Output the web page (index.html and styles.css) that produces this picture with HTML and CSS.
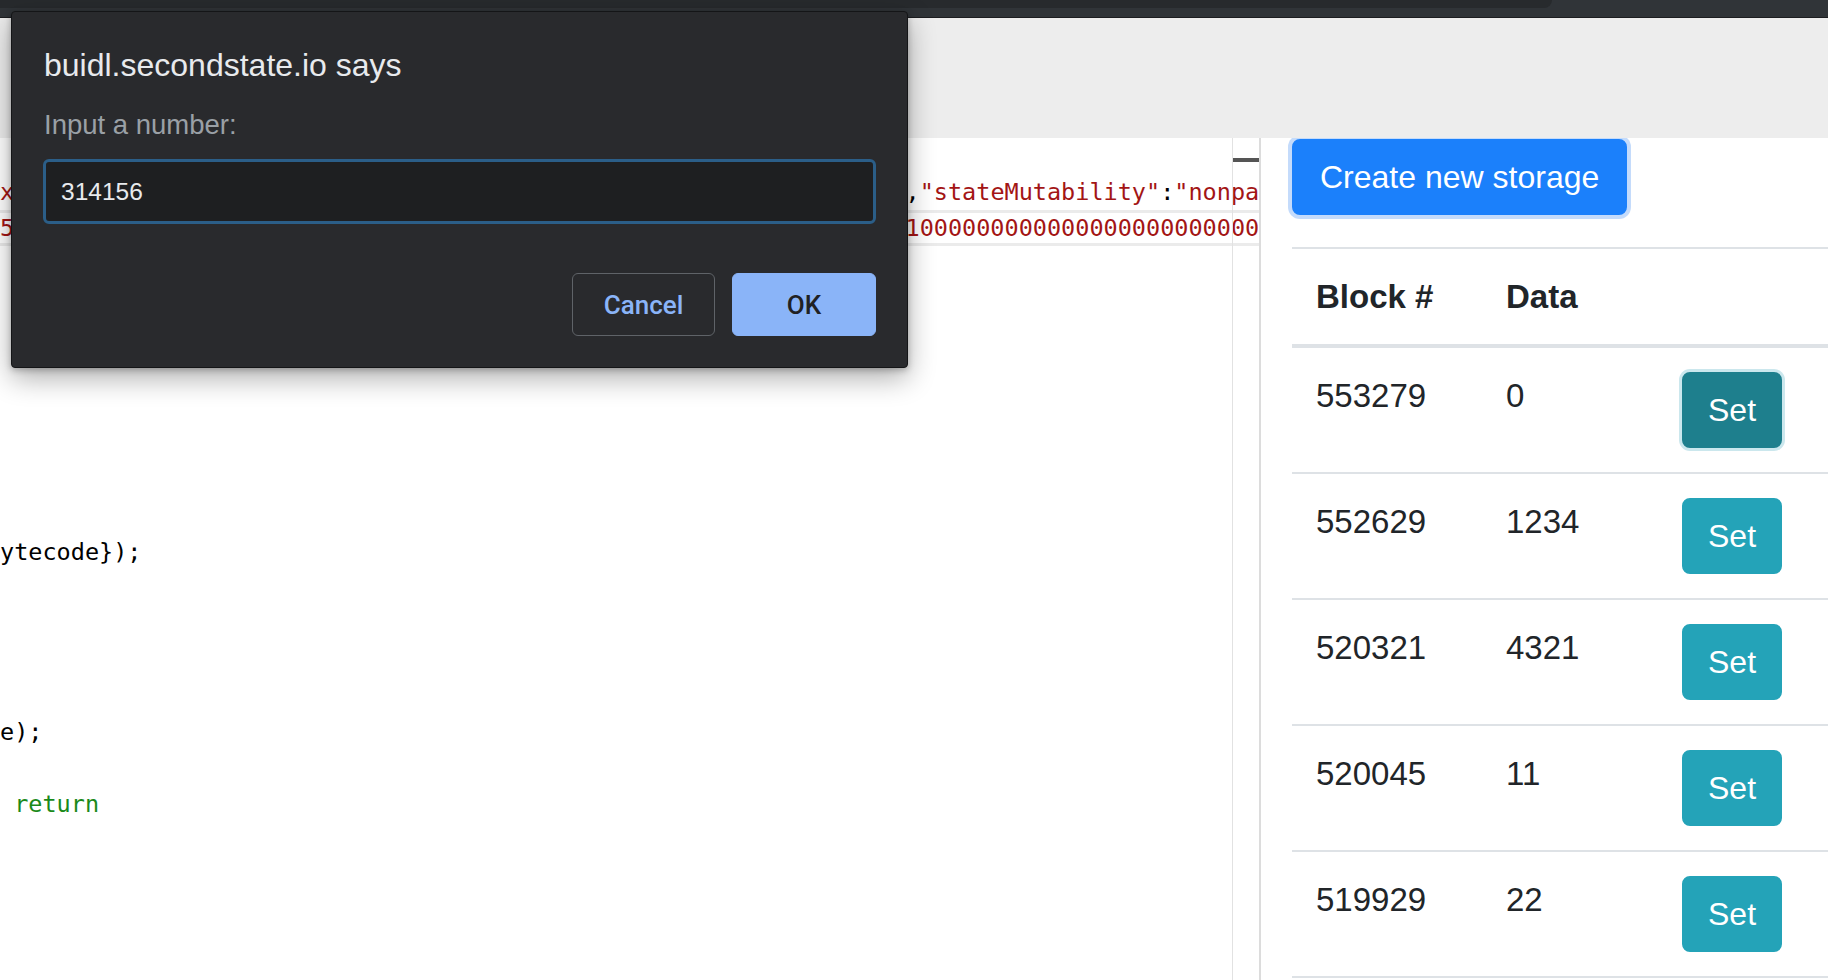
FILE: index.html
```html
<!DOCTYPE html>
<html>
<head>
<meta charset="utf-8">
<title>Storage</title>
<link rel="stylesheet" href="styles.css">
</head>
<body>
<header class="chrome">
  <div class="tabstrip"><div class="tab"></div></div>
  <div class="toolbar"></div>
</header>
<div class="band"></div>
<main class="page">
  <section class="editor">
    <div class="code">
      <div class="ln"> </div>
      <div class="ln"><span class="s">x","type":"uint256"}],"name":"save","outputs":[],"payable":false</span>,<span class="s">"stateMutability"</span>:<span class="s">"nonpayable"</span>,<span class="s">"type"</span>:<span class="s">"function"</span>}]</div>
      <div class="ln active"><span class="s">50608060405234801561001057600080fd5b5061013f806100206000396000f310000000000000000000000000000000000000</span></div>
      <div class="ln"> </div>
      <div class="ln"> </div>
      <div class="ln"> </div>
      <div class="ln"> </div>
      <div class="ln"> </div>
      <div class="ln"> </div>
      <div class="ln"> </div>
      <div class="ln"> </div>
      <div class="ln">ytecode});</div>
      <div class="ln"> </div>
      <div class="ln"> </div>
      <div class="ln"> </div>
      <div class="ln"> </div>
      <div class="ln">e);</div>
      <div class="ln"> </div>
      <div class="ln"> <span class="k">return</span></div>
      <div class="ln"> </div>
      <div class="ln"> </div>
      <div class="ln"> </div>
      <div class="ln"> </div>
      <div class="ln"> </div>
    </div>
    <div class="print-margin"></div>
    <div class="scroll-mark"></div>
  </section>
  <aside class="panel">
    <button class="btn btn-create">Create new storage</button>
    <table class="storage">
      <colgroup><col class="c1"><col class="c2"><col class="c3"></colgroup>
      <thead>
        <tr><th>Block #</th><th>Data</th><th></th></tr>
      </thead>
      <tbody>
        <tr><td>553279</td><td>0</td><td><button class="btn btn-set focused">Set</button></td></tr>
        <tr><td>552629</td><td>1234</td><td><button class="btn btn-set">Set</button></td></tr>
        <tr><td>520321</td><td>4321</td><td><button class="btn btn-set">Set</button></td></tr>
        <tr><td>520045</td><td>11</td><td><button class="btn btn-set">Set</button></td></tr>
        <tr><td>519929</td><td>22</td><td><button class="btn btn-set">Set</button></td></tr>
      </tbody>
    </table>
  </aside>
</main>
<div class="dialog">
  <div class="dlg-title">buidl.secondstate.io says</div>
  <div class="dlg-label">Input a number:</div>
  <div class="dlg-input">314156</div>
  <div class="dlg-actions">
    <button class="dlg-btn cancel">Cancel</button>
    <button class="dlg-btn ok">OK</button>
  </div>
</div>
</body>
</html>
```
FILE: styles.css
```css
html, body {
  margin: 0;
  padding: 0;
}
body {
  width: 1828px;
  height: 980px;
  overflow: hidden;
  background: #ffffff;
  position: relative;
  font-family: "Liberation Sans", Arial, sans-serif;
}

/* browser chrome */
.chrome {
  height: 18px;
  background: #303438;
  border-bottom: 1px solid #1c1d20;
  box-sizing: border-box;
}
.tabstrip {
  height: 8px;
}
.tab {
  width: 1552px;
  height: 8px;
  background: #272a2d;
  border-bottom-right-radius: 8px;
}
.band {
  height: 120px;
  background: #ededed;
}

/* page */
.page {
  display: flex;
  height: 842px;
}
.editor {
  flex: none;
  width: 1259px;
  position: relative;
  overflow: hidden;
  border-right: 2px solid #dcdcdc;
}
.code {
  font-family: "DejaVu Sans Mono", "Liberation Mono", monospace;
  font-size: 23.5px;
  line-height: 36px;
  color: #000000;
}
.ln {
  height: 36px;
  white-space: pre;
}
.ln.active {
  box-shadow: inset 0 3px 0 #ebebeb, inset 0 -3px 0 #ebebeb;
}
.s { color: #a31515; }
.k { color: #1a8a1a; }
.print-margin {
  position: absolute;
  left: 1232px;
  top: 0;
  bottom: 0;
  width: 1px;
  background: #e2e2e2;
}
.scroll-mark {
  position: absolute;
  left: 1233px;
  top: 20px;
  width: 26px;
  height: 4px;
  background: #555555;
}

/* right panel */
.panel {
  flex: 1;
  min-width: 0;
  overflow: hidden;
  padding: 1px 0 0 31px;
}
.btn {
  font-family: "Liberation Sans", Arial, sans-serif;
  font-size: 32px;
  line-height: 48px;
  color: #ffffff;
  border-radius: 8px;
  cursor: pointer;
}
.btn-create {
  display: block;
  background: #1b80fb;
  border: 2px solid #1b80fb;
  padding: 12px 26px;
  box-shadow: 0 0 0 4px #c4dbfb;
}
.storage {
  margin-top: 32px;
  width: 720px;
  border-collapse: collapse;
  table-layout: fixed;
  color: #212529;
  font-size: 33px;
  line-height: 47px;
}
.c1 { width: 190px; }
.c2 { width: 176px; }
.storage th,
.storage td {
  padding: 24px;
  text-align: left;
  vertical-align: top;
  border-top: 2px solid #dee2e6;
}
.storage th {
  font-weight: 700;
  border-bottom: 4px solid #dee2e6;
}
.storage td {
  font-weight: 400;
}
.storage tbody tr:last-child td {
  border-bottom: 2px solid #dee2e6;
}
.btn-set {
  background: #24a3b8;
  border: 2px solid #24a3b8;
  padding: 12px 24px;
}
.btn-set.focused {
  background: #1e7f8d;
  border-color: #1e7f8d;
  box-shadow: 0 0 0 3px #cbe7ed;
}

/* chrome prompt dialog */
.dialog {
  position: absolute;
  left: 11px;
  top: 11px;
  width: 897px;
  height: 357px;
  box-sizing: border-box;
  padding: 35px 31px 31px 31px;
  background: #292a2d;
  border: 1px solid #141517;
  border-radius: 4px;
  box-shadow: 0 10px 28px rgba(0, 0, 0, 0.32), 0 2px 6px rgba(0, 0, 0, 0.25);
}
.dlg-title {
  font-size: 32px;
  line-height: 36px;
  color: #e8eaed;
  padding-left: 1px;
}
.dlg-label {
  margin-top: 26px;
  font-size: 27.5px;
  line-height: 32px;
  color: #9aa0a6;
  padding-left: 1px;
}
.dlg-input {
  margin-top: 18px;
  height: 65px;
  box-sizing: border-box;
  border: 3px solid #2b5e88;
  border-radius: 6px;
  background: #1e1f21;
  padding-left: 15px;
  font-size: 24.5px;
  line-height: 59px;
  color: #e8eaed;
}
.dlg-actions {
  margin-top: 49px;
  display: flex;
  justify-content: flex-end;
  gap: 17px;
}
.dlg-btn {
  width: 143px;
  height: 63px;
  box-sizing: border-box;
  border-radius: 6px;
  font-family: Roboto, "Liberation Sans", sans-serif;
  font-weight: 500;
  font-size: 26px;
  cursor: pointer;
}
.dlg-btn.cancel {
  background: transparent;
  border: 1px solid #5f6368;
  color: #8ab4f8;
}
.dlg-btn.ok {
  width: 144px;
  background: #8ab4f8;
  border: 1px solid #8ab4f8;
  color: #202124;
}
```
